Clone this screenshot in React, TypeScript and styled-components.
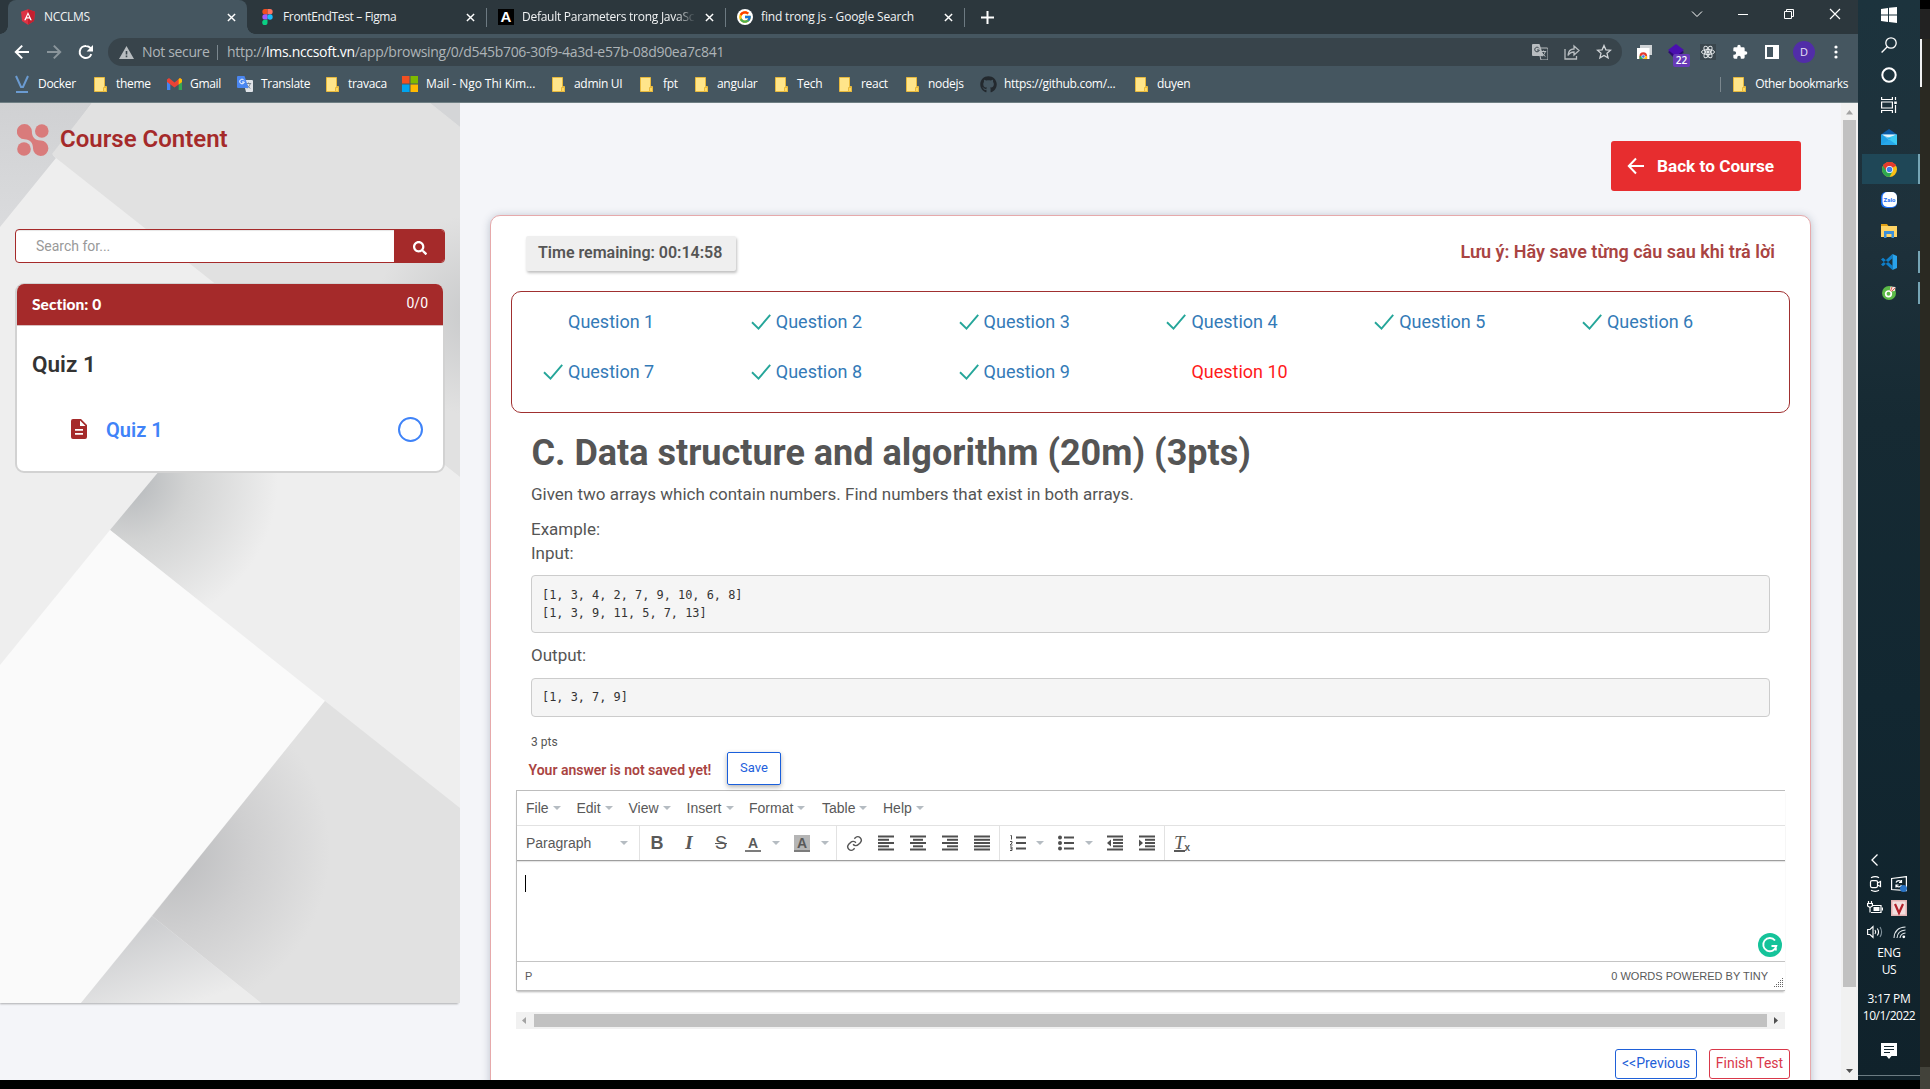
import React from "react";
import styled, { createGlobalStyle } from "styled-components";
import { FaSearch, FaGithub } from "react-icons/fa";
import { FcGoogle } from "react-icons/fc";

const Global = createGlobalStyle`
  * { box-sizing: border-box; }
  body { margin: 0; background: #000; overflow: hidden; }
  svg { display: block; flex: none; }
`;

const ui = `"Open Sans", "Noto Sans", sans-serif`;
const roboto = `Roboto, sans-serif`;
const arial = `"Liberation Sans", Arial, sans-serif`;

/* ---------- desktop ---------- */

const Desktop = styled.div`
  display: grid;
  grid-template-columns: 1858px 62px 10px;
  width: 1930px;
  height: 1089px;
  background: #000;
  overflow: hidden;
`;
const Browser = styled.div`
  display: flex;
  flex-direction: column;
  height: 1080px;
  overflow: hidden;
  background: #f4f5f9;
`;

/* ---------- browser chrome ---------- */

const TabStrip = styled.div`
  display: flex;
  height: 34px;
  flex: none;
  padding-left: 8px;
  background: #2c373d;
`;
const Tab = styled.div<{ $active?: boolean; $sep?: boolean }>`
  display: flex;
  align-items: center;
  width: 239px;
  height: 34px;
  padding: 0 0 0 12px;
  position: relative;
  color: #f1f3f4;
  background: ${(p) => (p.$active ? "#455660" : "transparent")};
  border-radius: 8px 8px 0 0;
  &::before {
    content: "";
    display: ${(p) => (p.$active ? "block" : "none")};
    position: absolute;
    left: -8px;
    right: -8px;
    bottom: 0;
    height: 8px;
    background:
      radial-gradient(circle at 0 0, transparent 7.500px, #455660 8px) left / 8px 8px no-repeat,
      radial-gradient(circle at 100% 0, transparent 7.500px, #455660 8px) right / 8px 8px no-repeat;
  }
  &::after {
    content: "";
    position: absolute;
    right: -1px;
    top: 8px;
    width: 1px;
    height: 19px;
    background: ${(p) => (p.$sep ? "#6d7a82" : "transparent")};
  }
`;
const Favicon = styled.div`
  width: 16px;
  height: 16px;
  flex: none;
  display: flex;
  align-items: center;
  justify-content: center;
`;
const TabText = styled.div<{ $ls?: number; $fade?: boolean }>`
  flex: none;
  width: 175px;
  margin: 0 8px;
  padding-bottom: 1px;
  overflow: hidden;
  white-space: nowrap;
  font: 12px/18px ${ui};
  letter-spacing: ${(p) => p.$ls ?? -0.35}px;
  ${(p) => p.$fade && "-webkit-mask-image: linear-gradient(90deg, #000 88%, transparent 99%);"}
`;
const WindowControls = styled.div`
  display: flex;
  margin-left: auto;
  padding: 6px 15px 0 0;
  gap: 30px;
  color: #fff;
`;
const PlusWrap = styled.div`
  display: flex;
  align-items: center;
  margin-left: 17px;
`;
const Toolbar = styled.div`
  display: flex;
  align-items: center;
  flex: none;
  height: 36px;
  padding: 0 12px 0 14px;
  background: #455660;
`;
const NavIcons = styled.div`
  display: flex;
  gap: 16px;
  width: 94px;
`;
const Omnibox = styled.div`
  display: flex;
  align-items: center;
  width: 1514px;
  height: 28px;
  padding: 0 10px 0 11px;
  border-radius: 14px;
  background: #38444b;
  color: #aeb4b8;
  font: 14px/20px ${ui};
  white-space: nowrap;
`;
const NotSecure = styled.span`
  margin-left: 8px;
  width: 75px;
  letter-spacing: -0.35px;
`;
const Bar = styled.span<{ $h: number }>`
  width: 1px;
  height: ${(p) => p.$h}px;
  background: #7b878e;
`;
const Url = styled.span`
  margin-left: 9px;
  letter-spacing: -0.3px;
  b { font-weight: 400; color: #fff; }
`;
const OmniIcons = styled.div`
  display: flex;
  align-items: center;
  gap: 16px;
  margin-left: auto;
`;
const ExtIcons = styled.div`
  display: flex;
  align-items: center;
  margin-left: auto;
  margin-right: 1px;
  gap: 14px;
`;
const ExtBox = styled.div`
  position: relative;
  width: 18px;
  height: 18px;
  display: flex;
  align-items: center;
  justify-content: center;
`;
const Count = styled.span`
  position: absolute;
  left: 6px;
  top: 11px;
  width: 17px;
  height: 13px;
  border-radius: 2px;
  background: #673ab7;
  color: #fff;
  font: 600 10px/13px ${ui};
  text-align: center;
`;
const Avatar = styled.div`
  width: 22px;
  height: 22px;
  margin: 0 -2px;
  border-radius: 50%;
  background: #512da8;
  color: #e8e0f5;
  font: 11px/22px ${ui};
  text-align: center;
`;
const Bookmarks = styled.div`
  display: flex;
  align-items: center;
  flex: none;
  height: 33px;
  padding: 0 10px 4px 14px;
  background: #455660;
  border-bottom: 1px solid #6f7f84;
`;
const Bookmark = styled.div<{ $w?: number; $gap?: number; $ls?: number }>`
  display: flex;
  align-items: center;
  gap: ${(p) => p.$gap ?? 8}px;
  width: ${(p) => (p.$w ? `${p.$w}px` : "auto")};
  flex: none;
  color: #fff;
  white-space: nowrap;
  font: 12px/18px ${ui};
  letter-spacing: ${(p) => p.$ls ?? -0.3}px;
`;
const BookmarkEnd = styled.div`
  display: flex;
  align-items: center;
  gap: 12px;
  margin-left: auto;
`;

/* ---------- page ---------- */

const Page = styled.div`
  display: grid;
  grid-template-columns: 461px 1fr 17px;
  height: 977px;
  background: #f4f5f9;
`;
const Sidebar = styled.aside`
  position: relative;
  width: 460px;
  height: 900px;
  background: #eee;
  box-shadow: -1px 2px 2px -1px rgba(0, 0, 0, 0.3);
  font-family: ${roboto};
`;
const Backdrop = styled.div`
  position: absolute;
  inset: 0;
`;
const SideContent = styled.div`
  position: relative;
  padding: 20px 15px 0;
`;
const Brand = styled.div`
  display: flex;
  align-items: center;
  height: 34px;
  padding-left: 2px;
  gap: 11px;
  color: #a52a2a;
  font: 600 24px/34px ${roboto};
  span { position: relative; top: -1px; }
`;
const SearchBox = styled.div`
  display: flex;
  width: 430px;
  height: 34px;
  margin-top: 72px;
  border: 1px solid #a52a2a;
  border-radius: 4px;
  overflow: hidden;
  background: #fff;
`;
const SearchField = styled.div`
  width: 378px;
  padding-left: 20px;
  color: #999;
  font: 14px/32px ${roboto};
  box-shadow: inset 0 1px 1px rgba(0, 0, 0, 0.1);
`;
const SearchButton = styled.div`
  flex: 1;
  display: flex;
  align-items: center;
  justify-content: center;
  padding: 3px 0 0 2px;
  background: #a52a2a;
  color: #fff;
`;
const SectionCard = styled.div`
  width: 430px;
  margin-top: 20px;
  height: 190px;
  border: 2px solid #d2d2d2;
  border-top-width: 1px;
  border-radius: 9px;
  background: #fff;
  overflow: hidden;
`;
const SectionHead = styled.div`
  display: flex;
  justify-content: space-between;
  height: 42px;
  padding: 0 15px;
  background: #a52a2a;
  border-bottom: 1px solid #d8c0c0;
  color: #fff;
`;
const SectionName = styled.span`
  font: 900 15.500px/40px Lato, sans-serif;
  letter-spacing: 0.05px;
`;
const SectionCount = styled.span`
  font: 14px/38px ${roboto};
`;
const QuizTitle = styled.div`
  height: 74px;
  padding-left: 15px;
  color: #333;
  font: 600 22.500px/76px ${roboto};
`;
const QuizRow = styled.div`
  display: flex;
  align-items: center;
  height: 58px;
  padding: 0 20px 0 54px;
`;
const QuizName = styled.span`
  margin: 2px auto 0 19px;
  color: #3f83f8;
  font: 600 20px/56px ${roboto};
`;
const Ring = styled.span`
  width: 25px;
  height: 25px;
  border: 2px solid #3f83f8;
  border-radius: 50%;
`;

const Main = styled.main`
  display: flex;
  flex-direction: column;
  height: 977px;
  padding: 38px 0 0 29px;
  overflow: hidden;
  font-family: ${roboto};
  color: #555;
`;
const BackButton = styled.div`
  display: flex;
  align-items: center;
  flex: none;
  width: 190px;
  height: 50px;
  margin-left: 1121px;
  padding-left: 16px;
  gap: 12px;
  border-radius: 3px;
  background: #e72d2f;
  color: #fff;
  font: 700 17.200px/52px ${roboto};
`;
const Panel = styled.section`
  flex: none;
  width: 1321px;
  height: 900px;
  margin-top: 24px;
  padding-top: 20px;
  border: 1px solid #e6a9ab;
  border-radius: 10px;
  background: #fff;
  box-shadow: 0 1px 9px rgba(40, 60, 90, 0.28);
`;
const PanelTop = styled.div`
  display: flex;
  justify-content: space-between;
  height: 55px;
  padding: 0 35px 0 35px;
`;
const Timer = styled.div`
  width: 210px;
  height: 35px;
  padding-left: 12px;
  border-radius: 2px;
  background: #efefef;
  box-shadow: 1px 2px 3px rgba(0, 0, 0, 0.25);
  font: 600 16px/33px ${roboto};
  white-space: nowrap;
`;
const Note = styled.div`
  color: #a94442;
  font: 600 18px/32px ${roboto};
`;
const Questions = styled.div`
  display: grid;
  grid-template-columns: repeat(6, 207.8px);
  grid-auto-rows: 50px;
  width: 1279px;
  height: 122px;
  margin-left: 20px;
  padding: 5px 0 0 31px;
  border: 1px solid #a03030;
  border-radius: 10px;
  overflow: hidden;
`;
const Question = styled.div<{ $current?: boolean }>`
  display: flex;
  align-items: center;
  gap: 5px;
  color: ${(p) => (p.$current ? "#ff1a1a" : "#337ab7")};
  font: 18px/50px ${roboto};
`;
const CheckSlot = styled.span`
  width: 20px;
`;
const Body = styled.div`
  padding: 0 40px;
  font: 17px/24px ${roboto};
`;
const Heading = styled.h1`
  margin: 20px 0 0 0.500px;
  font: 700 36px/40px ${roboto};
`;
const Line = styled.p<{ $top?: number }>`
  margin: ${(p) => p.$top ?? 0}px 0 0;
`;
const Code = styled.pre<{ $top: number; $h: number; $pad: number }>`
  width: 1239px;
  height: ${(p) => p.$h}px;
  margin: ${(p) => p.$top}px 0 0;
  padding: ${(p) => p.$pad}px 10px;
  border: 1px solid #ccc;
  border-radius: 4px;
  background: #f5f5f5;
  color: #333;
  font: 11.9px/18px "DejaVu Sans Mono", monospace;
`;
const Points = styled.div`
  margin: 17px 0 0 40px;
  font: 12px/16px ${roboto};
`;
const SaveRow = styled.div`
  display: flex;
  height: 33px;
  margin: 2px 0 0 37.5px;
`;
const Unsaved = styled.div`
  width: 198.5px;
  padding-top: 2px;
  color: #a94442;
  font: 600 14px/33px ${roboto};
`;
const SaveButton = styled.div`
  width: 54px;
  height: 33px;
  border: 1px solid #1a5fdb;
  border-radius: 2px;
  box-shadow: 0 2px 5px rgba(0, 0, 0, 0.3);
  color: #2360dc;
  font: 13px/30px ${roboto};
  text-align: center;
`;

/* ---------- editor ---------- */

const Editor = styled.div`
  width: 1269px;
  height: 201px;
  margin: 5px 0 0 25px;
  border: 1px solid #bdbdbd;
  border-right: 0;
  box-shadow: 0 2px 2px -1px rgba(0, 0, 0, 0.3);
  font-family: ${arial};
  color: #595959;
`;
const MenuBar = styled.div`
  display: flex;
  height: 35px;
  padding-left: 9px;
  border-bottom: 1px solid #e2e2e2;
`;
const MenuItem = styled.div<{ $w: number }>`
  display: flex;
  align-items: center;
  gap: 4px;
  width: ${(p) => p.$w}px;
  font: 14px/34px ${arial};
`;
const Caret = styled.span<{ $l?: number }>`
  width: 0;
  flex: none;
  margin-left: ${(p) => p.$l ?? 0}px;
  border: 4px solid transparent;
  border-top-color: #b5bcc2;
  border-bottom: 0;
`;
const ToolRow = styled.div`
  display: flex;
  height: 35px;
  border-bottom: 1px solid #9e9e9e;
  box-shadow: 0 1px 1px rgba(0, 0, 0, 0.1);
`;
const ToolGroup = styled.div<{ $w: number; $pad?: number }>`
  display: flex;
  align-items: center;
  width: ${(p) => p.$w}px;
  padding-left: ${(p) => p.$pad ?? 1}px;
  border-right: 1px solid #e2e2e2;
  font: 14px/34px ${arial};
  &:last-child { border-right: 0; }
`;
const Tool = styled.div<{ $l?: number }>`
  display: flex;
  align-items: center;
  justify-content: center;
  width: 32px;
  height: 34px;
  margin-left: ${(p) => p.$l ?? 0}px;
  flex: none;
`;
const Glyph = styled.span<{ $kind: "b" | "i" | "s" }>`
  line-height: 34px;
  ${(p) => p.$kind === "b" && `font: 700 18px/34px ${arial};`}
  ${(p) => p.$kind === "i" && `font: italic 700 19px/34px "Liberation Serif", serif;`}
  ${(p) => p.$kind === "s" && `font: 18px/34px ${arial}; text-decoration: line-through;`}
`;
const ColorGlyph = styled.span<{ $fill?: boolean }>`
  width: 16px;
  height: 17px;
  border-bottom: 2px solid #7c7c7c;
  background: ${(p) => (p.$fill ? "#b5b5b5" : "transparent")};
  text-align: center;
  font: 700 14px/16px ${arial};
`;
const ClearGlyph = styled.span`
  display: flex;
  align-items: flex-end;
  height: 17px;
  font: italic 19px/17px "Liberation Serif", serif;
  border-bottom: 0;
  span { font: 700 10px/8px ${arial}; }
  i { border-bottom: 2px solid #595959; height: 17px; line-height: 15px; }
`;
const EditArea = styled.div`
  position: relative;
  height: 100px;
  padding: 14px 0 0 8px;
`;
const TextCursor = styled.div`
  width: 1px;
  height: 17px;
  background: #000;
`;
const Grammarly = styled.div`
  position: absolute;
  left: 1241px;
  top: 72px;
`;
const StatusBar = styled.div`
  display: flex;
  height: 29px;
  padding: 0 1px 0 8px;
  border-top: 1px solid #c4c4c4;
  font: 11px/28px ${arial};
`;
const Words = styled.span`
  margin-left: auto;
  margin-right: 6px;
`;
const HScroll = styled.div`
  display: flex;
  align-items: center;
  justify-content: space-between;
  width: 1269px;
  height: 17px;
  margin: 21px 0 0 25px;
  padding: 0 5px 0 4px;
  background: #f1f1f1;
`;
const HThumb = styled.div`
  width: 1233px;
  height: 13px;
  background: #c1c1c1;
`;
const Actions = styled.div`
  display: flex;
  gap: 12px;
  justify-content: flex-end;
  margin: 20px 20px 0 0;
`;
const Outline = styled.div<{ $w: number; $c: string }>`
  width: ${(p) => p.$w}px;
  height: 30px;
  border: 1px solid ${(p) => p.$c};
  border-radius: 3px;
  color: ${(p) => p.$c};
  text-align: center;
  font: 14px/27px ${roboto};
  white-space: nowrap;
`;
const VScroll = styled.div`
  display: flex;
  flex-direction: column;
  align-items: center;
  height: 977px;
  padding-top: 7px;
  background: #f1f1f1;
`;
const VThumb = styled.div`
  width: 13px;
  height: 867px;
  margin: 5px 0 82px;
  background: #c1c1c1;
`;

/* ---------- task bar ---------- */

const TaskBar = styled.div`
  display: flex;
  flex-direction: column;
  height: 1080px;
  background: linear-gradient(180deg, #1c333d 0, #1e313b 230px, #162a33 420px, #122731 700px, #10222b 1080px);
  color: #fff;
`;
const TaskItem = styled.div<{ $h: number; $on?: boolean; $run?: number }>`
  position: relative;
  display: flex;
  align-items: center;
  justify-content: center;
  height: ${(p) => p.$h}px;
  margin-left: 4px;
  padding-right: 4px;
  background: ${(p) => (p.$on ? "#1f4757" : "transparent")};
  &::after {
    content: "";
    position: absolute;
    right: 0;
    top: calc(50% - ${(p) => (p.$run ?? 0) / 2}px);
    width: 2px;
    height: ${(p) => p.$run ?? 0}px;
    background: #76a5b5;
  }
`;
const Tray = styled.div`
  display: flex;
  flex-direction: column;
  margin-top: auto;
  height: 232px;
`;
const TrayRow = styled.div<{ $h: number }>`
  display: flex;
  align-items: center;
  height: ${(p) => p.$h}px;
  padding-left: 9px;
  gap: 8px;
`;
const TrayText = styled.div<{ $top?: number; $ls?: number }>`
  height: 17px;
  margin-top: ${(p) => p.$top ?? 0}px;
  text-align: center;
  white-space: nowrap;
  font: 12px/17px ${ui};
  letter-spacing: ${(p) => p.$ls ?? -0.5}px;
`;
const TrayBottom = styled.div`
  display: flex;
  justify-content: center;
  margin-top: 19px;
  height: 33px;
  border-bottom: 1px solid #6b7b82;
`;
const Edge = styled.div`
  display: flex;
  height: 1089px;
  background: linear-gradient(180deg, #000 9px, #222 9px, #222 39px, #2a2922 39px, #2a2922 1067px, #42423a 1067px);
`;
const EdgeLine = styled.div`
  width: 2px;
  height: 48px;
  margin-top: 39px;
  background: #f2f2f2;
`;

/* ---------- drawings ---------- */

const Folder = () => (
  <svg width="13" height="15" viewBox="0 0 13 15">
    <path d="M.5.5h10v9h2v5H.5z" fill="#ffe58a" stroke="#e8b93c" />
    <path d="M9.5 14.5v-4h3v4z" fill="#ffd95e" stroke="#e8b93c" />
  </svg>
);
const X = ({ s = 9, w = 1.6 }: { s?: number; w?: number }) => (
  <svg width={s} height={s} viewBox="0 0 10 10" stroke="#fff" strokeWidth={w} fill="none">
    <path d="M1 1l8 8M9 1l-8 8" />
  </svg>
);
const Angular = () => (
  <svg width="16" height="16" viewBox="0 0 16 16">
    <path d="M8 .3l7 2.5-1 9.3-6 3.6-6-3.6-1-9.3z" fill="#dd3344" />
    <path d="M8 .3l7 2.5-1 9.3-6 3.6z" fill="#c3202f" />
    <path d="M8 3L4.2 11.3h1.5l.8-1.9h3l.8 1.9h1.5zM8 5.6l1.1 2.7H6.9z" fill="#fff" fillRule="evenodd" />
  </svg>
);
const Figma = () => (
  <svg width="11" height="16" viewBox="0 0 11 16">
    <path d="M5.5 0H3a2.6 2.6 0 000 5.3h2.5z" fill="#f24e1e" />
    <path d="M5.5 0H8a2.6 2.6 0 010 5.3H5.5z" fill="#ff7262" />
    <path d="M5.5 5.3H3a2.6 2.6 0 000 5.3h2.5z" fill="#a259ff" />
    <circle cx="8" cy="8" r="2.7" fill="#1abcfe" />
    <path d="M5.5 10.7H3A2.65 2.65 0 105.5 13.3z" fill="#0acf83" />
  </svg>
);
const LetterBox = styled.span`
  width: 16px;
  height: 16px;
  background: #000;
  color: #fff;
  text-align: center;
  font: 700 15px/16px ${arial};
`;
const GBadge = styled.span`
  display: flex;
  align-items: center;
  justify-content: center;
  width: 16px;
  height: 16px;
  border-radius: 50%;
  background: #fff;
`;
const Arrow = ({ flip, c = "#fff" }: { flip?: boolean; c?: string }) => (
  <svg width="16" height="16" viewBox="0 0 16 16" fill="none" stroke={c} strokeWidth="2" transform={flip ? "scale(-1 1)" : undefined}>
    <path d="M15 8H2M8.2 1.6L1.8 8l6.4 6.4" />
  </svg>
);
const Reload = () => (
  <svg width="16" height="16" viewBox="0 0 16 16" fill="none">
    <path d="M13.3 10.2A6 6 0 118 2a6 6 0 014.6 2.2" stroke="#fff" strokeWidth="2" />
    <path d="M15 1v6.4H8.6z" fill="#fff" />
  </svg>
);
const Warning = () => (
  <svg width="15" height="13" viewBox="0 0 15 13">
    <path d="M7.5 0L15 13H0zM6.7 5v3.6h1.6V5zm0 4.6v1.6h1.6V9.6z" fill="#b8bdc0" fillRule="evenodd" />
  </svg>
);
const GTranslate = ({ mono }: { mono?: boolean }) => (
  <svg width="16" height="16" viewBox="0 0 16 16">
    <path d="M6 4h9a1 1 0 011 1v10a1 1 0 01-1 1H9z" fill={mono ? "none" : "#dfe3e8"} stroke={mono ? "#b8bdc0" : "none"} />
    <path d="M8.8 7.5h5.4M11.5 6.5v1M13.2 7.8c-.5 2-2 3.6-3.4 4.6M9.8 8.6c.8 1.7 2 2.8 3.6 3.8" stroke={mono ? "#b8bdc0" : "#7b8794"} fill="none" />
    <path d="M1 0h6.5l4 12H1a1 1 0 01-1-1V1a1 1 0 011-1z" fill={mono ? "#b8bdc0" : "#4a86f0"} />
    <path d="M7 4.3A2.3 2.3 0 107.3 6H5" stroke={mono ? "#38444b" : "#fff"} fill="none" />
  </svg>
);
const Share = () => (
  <svg width="16" height="16" viewBox="0 0 16 16" fill="none" stroke="#b8bdc0" strokeWidth="1.3">
    <path d="M1 5v10h11.500v-3M4 11.500c.3-4 2.200-6.500 6-6.500V2l5 4.500-5 4.500V8C7.500 8 5.500 9 4 11.500z" />
  </svg>
);
const Star = () => (
  <svg width="16" height="16" viewBox="0 0 16 16" fill="none" stroke="#cfd3d6" strokeWidth="1.3">
    <path d="M8 1.500l1.900 4.300 4.700.4-3.600 3.100 1.100 4.600L8 11.500l-4.100 2.400L5 9.300 1.400 6.200l4.700-.4z" />
  </svg>
);
const ReactMark = () => (
  <svg width="16" height="16" viewBox="0 0 16 16" fill="none" stroke="#e4e7e9" strokeWidth="1">
    <rect width="16" height="16" fill="#3a464d" stroke="none" />
    <ellipse cx="8" cy="8" rx="6.500" ry="2.500" />
    <ellipse cx="8" cy="8" rx="6.500" ry="2.500" transform="rotate(60 8 8)" />
    <ellipse cx="8" cy="8" rx="6.500" ry="2.500" transform="rotate(120 8 8)" />
    <circle cx="8" cy="8" r="1.200" fill="#e4e7e9" />
  </svg>
);
const Puzzle = () => (
  <svg width="16" height="16" viewBox="0 0 24 24" fill="#fff">
    <path d="M20.500 11H19V7a2 2 0 00-2-2h-4V3.500a2.500 2.500 0 00-5 0V5H4a2 2 0 00-2 2v3.800h1.500a2.700 2.700 0 010 5.400H2V20a2 2 0 002 2h3.800v-1.500a2.700 2.700 0 015.400 0V22H17a2 2 0 002-2v-4h1.500a2.500 2.500 0 000-5z" />
  </svg>
);
const ChromeMark = () => (
  <svg width="15" height="15" viewBox="0 0 14 14">
    <circle cx="7" cy="7" r="7" fill="#fbc116" />
    <path d="M7 7L.94 3.500A7 7 0 0113.060 3.500z" fill="#e33b2e" />
    <path d="M7 7L.94 3.500A7 7 0 007 14l3-5.300z" fill="#2da94f" />
    <path d="M7 3.800h6.200A7 7 0 00.94 3.500L3.900 8z" fill="#e33b2e" />
    <circle cx="7" cy="7" r="3.300" fill="#fff" />
    <circle cx="7" cy="7" r="2.600" fill="#3f7ee8" />
  </svg>
);
const Check = () => (
  <svg width="20" height="17" viewBox="0 0 20 17" fill="none" stroke="#26a69a" strokeWidth="1.900">
    <path d="M1 8.300L7.500 14.700 19.200.8" />
  </svg>
);
const Tri = ({ d, c, w = 9, h = 9 }: { d: string; c: string; w?: number; h?: number }) => (
  <svg width={w} height={h} viewBox={`0 0 ${w} ${h}`}>
    <path d={d} fill={c} />
  </svg>
);
const Lines = ({ rows, children }: { rows: number[][]; children?: React.ReactNode }) => (
  <svg width="18" height="16" viewBox="0 0 18 16" stroke="#4f4f4f" fill="#4f4f4f">
    {rows.map(([y, a, b]) => (
      <path key={y} d={`M${a} ${y}H${b}`} strokeWidth="2" />
    ))}
    {children}
  </svg>
);
const ys = [1.500, 4.800, 8, 11.300, 14.500];

const Backdrops = () => (
  <svg width="460" height="900" viewBox="0 103 460 900">
    <defs>
      <linearGradient id="tl" x1="0" y1="0" x2="0" y2="1">
        <stop offset="0" stopColor="#d0d1d3" />
        <stop offset="1" stopColor="#dadbdd" />
      </linearGradient>
      <radialGradient id="mid" gradientUnits="userSpaceOnUse" cx="128" cy="480" r="150">
        <stop offset="0" stopColor="#b4b7ba" />
        <stop offset=".4" stopColor="#d2d3d3" />
        <stop offset="1" stopColor="#eee" />
      </radialGradient>
      <radialGradient id="low" gradientUnits="userSpaceOnUse" cx="165" cy="850" r="165">
        <stop offset="0" stopColor="#b9babc" />
        <stop offset=".5" stopColor="#cfcfd0" />
        <stop offset="1" stopColor="#e1e1e1" />
      </radialGradient>
      <linearGradient id="bot" gradientUnits="userSpaceOnUse" x1="145" y1="925" x2="175" y2="1010">
        <stop offset="0" stopColor="#cdced0" />
        <stop offset="1" stopColor="#ececec" />
      </linearGradient>
      <radialGradient id="rt" gradientUnits="userSpaceOnUse" cx="475" cy="315" r="100">
        <stop offset="0" stopColor="#c9cacb" />
        <stop offset="1" stopColor="#e1e1e1" />
      </radialGradient>
    </defs>
    <rect y="103" width="460" height="900" fill="#eee" />
    <path d="M0 103H92L53 155 56 158 0 227z" fill="url(#tl)" />
    <path d="M92 103H430L460 127V477L56 158 52 154z" fill="#e1e1e1" />
    <path d="M460 200V477L340 382V200z" fill="url(#rt)" />
    <path d="M430 103H460V127z" fill="#d4d5d7" />
    <path d="M110 530L200 422H390L460 477V808z" fill="url(#mid)" />
    <path d="M0 665L110 530 325 701 81 1003H0z" fill="#fafafa" />
    <path d="M325 701L460 808V1003H261L152 916z" fill="url(#low)" />
    <path d="M152 916L261 1003H81z" fill="url(#bot)" />
  </svg>
);

const bookmarks: { t: string; w: number; icon?: React.ReactNode; gap?: number; ls?: number }[] = [
  { t: "Docker", w: 80, icon: <svg width="16" height="18" viewBox="0 0 16 18" fill="none" stroke="#6b9bd1" strokeWidth="2"><path d="M2 1l5 11h2l5-11M2 17h12" /></svg> },
  { t: "theme", w: 73, gap: 9 },
  { t: "Gmail", w: 70, icon: <svg width="15" height="12" viewBox="0 0 15 12"><path d="M0 1.500V12h3.300V5z" fill="#4285f4" /><path d="M15 1.500V12h-3.300V5z" fill="#34a853" /><path d="M0 1.500V4l7.500 5.500L15 4V1.500L13 0 7.500 4.500 2 0z" fill="#ea4335" /><path d="M11.700 1v5.500L15 4V1.500L13 0z" fill="#fbbc04" /></svg> },
  { t: "Translate", w: 89, icon: <GTranslate /> },
  { t: "travaca", w: 76, gap: 9 },
  { t: "Mail - Ngo Thi Kim...", w: 150, ls: -0.06, icon: <svg width="16" height="16" viewBox="0 0 16 16"><path d="M0 0h7.500v7.500H0z" fill="#f25022" /><path d="M8.500 0H16v7.500H8.500z" fill="#7fba00" /><path d="M0 8.500h7.500V16H0z" fill="#00a4ef" /><path d="M8.500 8.500H16V16H8.500z" fill="#ffb900" /></svg> },
  { t: "admin UI", w: 88, gap: 9 },
  { t: "fpt", w: 55, gap: 10 },
  { t: "angular", w: 80, gap: 9 },
  { t: "Tech", w: 64, gap: 9 },
  { t: "react", w: 67, gap: 9 },
  { t: "nodejs", w: 74, gap: 9 },
  { t: "https://github.com/...", w: 155, gap: 7, icon: <FaGithub size={17} color="#23292e" /> },
  { t: "duyen", w: 70, gap: 9 },
];

const menus: [string, number][] = [["File", 50.500], ["Edit", 52], ["View", 58], ["Insert", 62.500], ["Format", 73], ["Table", 61], ["Help", 50]];

export default function App() {
  return (
    <>
      <Global />
      <Desktop>
        <Browser>
          <TabStrip>
            <Tab $active>
              <Favicon><Angular /></Favicon>
              <TabText>NCCLMS</TabText>
              <X />
            </Tab>
            <Tab $sep>
              <Favicon><Figma /></Favicon>
              <TabText>FrontEndTest – Figma</TabText>
              <X />
            </Tab>
            <Tab $sep>
              <Favicon><LetterBox>A</LetterBox></Favicon>
              <TabText $fade $ls={-0.26}>Default Parameters trong JavaScript</TabText>
              <X />
            </Tab>
            <Tab $sep>
              <Favicon><GBadge><FcGoogle size={14} /></GBadge></Favicon>
              <TabText $ls={-0.16}>find trong js - Google Search</TabText>
              <X />
            </Tab>
            <PlusWrap>
              <svg width="13" height="13" viewBox="0 0 13 13" stroke="#fff" strokeWidth="2"><path d="M6.500 0v13M0 6.500h13" /></svg>
            </PlusWrap>
            <WindowControls>
              <svg width="16" height="16" viewBox="0 0 16 16" fill="none" stroke="#fff"><path d="M3 5.500l5 5 5-5" /></svg>
              <svg width="16" height="16" viewBox="0 0 16 16" fill="none" stroke="#fff"><path d="M3 8.500h10" /></svg>
              <svg width="16" height="16" viewBox="0 0 16 16" fill="none" stroke="#fff"><path d="M3.500 5.500h7v7h-7zM5.500 5.500v-2h7v7h-2" /></svg>
              <svg width="16" height="16" viewBox="0 0 16 16" fill="none" stroke="#fff" strokeWidth="1.200"><path d="M3 3l10 10M13 3L3 13" /></svg>
            </WindowControls>
          </TabStrip>
          <Toolbar>
            <NavIcons>
              <Arrow />
              <Arrow flip c="#8a959b" />
              <Reload />
            </NavIcons>
            <Omnibox>
              <Warning />
              <NotSecure>Not secure</NotSecure>
              <Bar $h={15} />
              <Url>http://<b>lms.nccsoft.vn</b>/app/browsing/0/d545b706-30f9-4a3d-e57b-08d90ea7c841</Url>
              <OmniIcons>
                <GTranslate mono />
                <Share />
                <Star />
              </OmniIcons>
            </Omnibox>
            <ExtIcons>
              <ExtBox>
                <svg width="15" height="14" viewBox="0 0 15 14"><path d="M3 0h12v10H3z" fill="#cfd3d6" /><path d="M0 3h12.500v11H0z" fill="#fff" /><path d="M2.500 14V11a3.800 3.800 0 017.600 0v3z" fill="#e33b2e" /><path d="M2.500 14v-3l3.800 0V14z" fill="#2da94f" /><path d="M6.300 11h3.800v3H6.300z" fill="#fbc116" /><circle cx="6.300" cy="11.500" r="1.700" fill="#3f7ee8" stroke="#fff" strokeWidth=".6" /></svg>
              </ExtBox>
              <ExtBox>
                <svg width="16" height="16" viewBox="0 0 16 16"><path d="M0 8l8-5 8 5-8 8z" fill="#2d0a73" /><path d="M0 6l8-6 8 6-8 6z" fill="#4a0fb0" /></svg>
                <Count>22</Count>
              </ExtBox>
              <ExtBox><ReactMark /></ExtBox>
              <ExtBox><Puzzle /></ExtBox>
              <ExtBox>
                <svg width="14" height="14" viewBox="0 0 14 14"><path d="M0 0h14v14H0zM2 2v10h6V2z" fill="#fff" fillRule="evenodd" /></svg>
              </ExtBox>
              <Avatar>D</Avatar>
              <ExtBox>
                <svg width="4" height="14" viewBox="0 0 4 14" fill="#fff"><circle cx="2" cy="2" r="1.600" /><circle cx="2" cy="7" r="1.600" /><circle cx="2" cy="12" r="1.600" /></svg>
              </ExtBox>
            </ExtIcons>
          </Toolbar>
          <Bookmarks>
            {bookmarks.map((b) => (
              <Bookmark key={b.t} $w={b.w} $gap={b.gap} $ls={b.ls}>
                {b.icon ?? <Folder />}
                <span>{b.t}</span>
              </Bookmark>
            ))}
            <BookmarkEnd>
              <Bar $h={15} />
              <Bookmark $gap={9} $ls={-0.38}><Folder /><span>Other bookmarks</span></Bookmark>
            </BookmarkEnd>
          </Bookmarks>
          <Page>
            <Sidebar>
              <Backdrop><Backdrops /></Backdrop>
              <SideContent>
                <Brand>
                  <svg width="32" height="32" viewBox="0 0 32 32" fill="#d97b7b">
                    <circle cx="24.800" cy="7" r="6.800" />
                    <circle cx="7" cy="25" r="6.800" />
                    <path d="M7.500 0a7.500 7.500 0 017.400 8c0 4 2.500 8.500 8.500 8.600A7.700 7.700 0 1116 24c0-5-3-8.500-8.500-8.700A7.600 7.600 0 017.500 0z" />
                  </svg>
                  <span>Course Content</span>
                </Brand>
                <SearchBox>
                  <SearchField>Search for...</SearchField>
                  <SearchButton><FaSearch size={14} /></SearchButton>
                </SearchBox>
                <SectionCard>
                  <SectionHead>
                    <SectionName>Section: 0</SectionName>
                    <SectionCount>0/0</SectionCount>
                  </SectionHead>
                  <QuizTitle>Quiz 1</QuizTitle>
                  <QuizRow>
                    <svg width="16" height="20" viewBox="0 0 16 20"><path d="M2 0h8l6 6v12a2 2 0 01-2 2H2a2 2 0 01-2-2V2a2 2 0 012-2zM9 1.500V7h5.500zM4 10v1.800h8V10zm0 4v1.800h8V14z" fill="#a52a2a" fillRule="evenodd" /></svg>
                    <QuizName>Quiz 1</QuizName>
                    <Ring />
                  </QuizRow>
                </SectionCard>
              </SideContent>
            </Sidebar>
            <Main>
              <BackButton>
                <svg width="18" height="18" viewBox="0 0 18 18" fill="none" stroke="#fff" strokeWidth="2"><path d="M17 9H2.500M9 1.500L1.800 9 9 16.500" /></svg>
                Back to Course
              </BackButton>
              <Panel>
                <PanelTop>
                  <Timer>Time remaining: 00:14:58</Timer>
                  <Note>Lưu ý: Hãy save từng câu sau khi trả lời</Note>
                </PanelTop>
                <Questions>
                  {Array.from({ length: 10 }, (_, i) => i + 1).map((n) => (
                    <Question key={n} $current={n === 10}>
                      <CheckSlot>{n !== 1 && n !== 10 && <Check />}</CheckSlot>
                      Question {n}
                    </Question>
                  ))}
                </Questions>
                <Body>
                  <Heading>C. Data structure and algorithm (20m) (3pts)</Heading>
                  <Line $top={9}>Given two arrays which contain numbers. Find numbers that exist in both arrays.</Line>
                  <Line $top={11}>Example:</Line>
                  <Line>Input:</Line>
                  <Code $top={10} $h={58} $pad={10}>{"[1, 3, 4, 2, 7, 9, 10, 6, 8]\n[1, 3, 9, 11, 5, 7, 13]"}</Code>
                  <Line $top={10}>Output:</Line>
                  <Code $top={11} $h={39} $pad={9}>[1, 3, 7, 9]</Code>
                </Body>
                <Points>3 pts</Points>
                <SaveRow>
                  <Unsaved>Your answer is not saved yet!</Unsaved>
                  <SaveButton>Save</SaveButton>
                </SaveRow>
                <Editor>
                  <MenuBar>
                    {menus.map(([t, w]) => (
                      <MenuItem key={t} $w={w}>{t}<Caret /></MenuItem>
                    ))}
                  </MenuBar>
                  <ToolRow>
                    <ToolGroup $w={123} $pad={9}>Paragraph<Caret $l={29} /></ToolGroup>
                    <ToolGroup $w={197}>
                      <Tool><Glyph $kind="b">B</Glyph></Tool>
                      <Tool><Glyph $kind="i">I</Glyph></Tool>
                      <Tool><Glyph $kind="s">S</Glyph></Tool>
                      <Tool><ColorGlyph>A</ColorGlyph></Tool>
                      <Caret $l={3} />
                      <Tool $l={6}><ColorGlyph $fill>A</ColorGlyph></Tool>
                      <Caret $l={3} />
                    </ToolGroup>
                    <ToolGroup $w={163}>
                      <Tool>
                        <svg width="17" height="17" viewBox="0 0 24 24" fill="none" stroke="#555" strokeWidth="2"><path d="M10 13a5 5 0 007.500.500l3-3a5 5 0 00-7-7l-1.700 1.700" /><path d="M14 11a5 5 0 00-7.500-.500l-3 3a5 5 0 007 7l1.700-1.700" /></svg>
                      </Tool>
                      <Tool><Lines rows={ys.map((y, i) => [y, 1, i % 2 ? 12 : 17])} /></Tool>
                      <Tool><Lines rows={ys.map((y, i) => [y, i % 2 ? 4 : 1, i % 2 ? 14 : 17])} /></Tool>
                      <Tool><Lines rows={ys.map((y, i) => [y, i % 2 ? 6 : 1, 17])} /></Tool>
                      <Tool><Lines rows={ys.map((y) => [y, 1, 17])} /></Tool>
                    </ToolGroup>
                    <ToolGroup $w={165} $pad={2}>
                      <Tool>
                        <Lines rows={[[2.500, 7, 17], [8, 7, 17], [13.500, 7, 17]]}>
                          <path d="M1.500.500h1v4M1 6.500h2v1.500L1 10h2.500M1 12h2v3.500H1M1.500 13.700H3" fill="none" strokeWidth="1" />
                        </Lines>
                      </Tool>
                      <Caret $l={2} />
                      <Tool $l={6}>
                        <Lines rows={[[2.500, 7, 17], [8, 7, 17], [13.500, 7, 17]]}>
                          <g stroke="none"><circle cx="3" cy="2.500" r="2" /><circle cx="3" cy="8" r="2" /><circle cx="3" cy="13.500" r="2" /></g>
                        </Lines>
                      </Tool>
                      <Caret $l={3} />
                      <Tool $l={6}><Lines rows={ys.map((y, i) => [y, i > 0 && i < 4 ? 7 : 1, 17])}><path d="M5 4.500v7L1 8z" stroke="none" /></Lines></Tool>
                      <Tool><Lines rows={ys.map((y, i) => [y, i > 0 && i < 4 ? 7 : 1, 17])}><path d="M1 4.500v7L5 8z" stroke="none" /></Lines></Tool>
                    </ToolGroup>
                    <ToolGroup $w={60}>
                      <Tool><ClearGlyph><i>T</i><span>x</span></ClearGlyph></Tool>
                    </ToolGroup>
                  </ToolRow>
                  <EditArea>
                    <TextCursor />
                    <Grammarly>
                      <svg width="24" height="24" viewBox="0 0 24 24"><circle cx="12" cy="12" r="12" fill="#15c39a" /><path d="M17 7.500A6.600 6.600 0 1018.300 13H13.500M17.800 13.200v4.300" fill="none" stroke="#fff" strokeWidth="1.900" /></svg>
                    </Grammarly>
                  </EditArea>
                  <StatusBar>
                    <span>P</span>
                    <Words>0 WORDS POWERED BY TINY</Words>
                    <svg width="10" height="28" viewBox="0 0 10 28" fill="#666">
                      {[0, 1, 2, 3, 4].map((r) => [0, 1, 2, 3, 4].map((c) => (r + c >= 4 ? <rect key={`${r}${c}`} x={c * 2} y={16 + r * 2} width="1" height="1" /> : null)))}
                    </svg>
                  </StatusBar>
                </Editor>
                <HScroll>
                  <Tri d="M6 1v7L2 4.500z" c="#a3a3a3" />
                  <HThumb />
                  <Tri d="M3 1v7l4-3.500z" c="#505050" />
                </HScroll>
                <Actions>
                  <Outline $w={82} $c="#1f60d8">&lt;&lt;Previous</Outline>
                  <Outline $w={81} $c="#d9384a">Finish Test</Outline>
                </Actions>
              </Panel>
            </Main>
            <VScroll>
              <Tri d="M1 4.500h7L4.500 0z" c="#a3a3a3" h={5} />
              <VThumb />
              <Tri d="M1 0h7L4.500 4z" c="#505050" h={5} />
            </VScroll>
          </Page>
        </Browser>
        <TaskBar>
          <TaskItem $h={30}>
            <svg width="16" height="16" viewBox="0 0 16 16" fill="#fff"><path d="M0 2l7-1v6.500H0zM8 .8L16 0v7.500H8zM0 8.500h7V15l-7-1zM8 8.500h8V16l-8-.9z" /></svg>
          </TaskItem>
          <TaskItem $h={30}>
            <svg width="16" height="16" viewBox="0 0 16 16" fill="none" stroke="#fff" strokeWidth="1.300"><circle cx="10" cy="6" r="5.200" /><path d="M6.300 9.700L.6 15.500" /></svg>
          </TaskItem>
          <TaskItem $h={30}>
            <svg width="16" height="16" viewBox="0 0 16 16" fill="none" stroke="#fff" strokeWidth="2"><circle cx="8" cy="8" r="6.700" /></svg>
          </TaskItem>
          <TaskItem $h={30}>
            <svg width="16" height="16" viewBox="0 0 16 16" fill="none" stroke="#fff" strokeWidth="1.200"><path d="M.6 0v2.500h10.800V0M.6 5h10.800v6H.6zM.6 16v-2.500h10.800V16M14.500 0v3M14.500 8v8" /><path d="M13.200 4.500h2.600v2.500h-2.600z" fill="#fff" stroke="none" /></svg>
          </TaskItem>
          <TaskItem $h={34}>
            <svg width="16" height="16" viewBox="0 0 16 16"><path d="M0 5.500L8 0l8 5.500V9H0z" fill="#0c59a4" /><path d="M0 5.500h16V16H0z" fill="#28a8ea" /><path d="M1 5.500h14L8 11z" fill="#e8f4fb" /><path d="M16 5.500V16L6 9z" fill="#3ccbf4" /><path d="M0 16l10-6.500L0 5.500z" fill="#1b9de2" opacity=".6" /></svg>
          </TaskItem>
          <TaskItem $h={30} $on $run={30}><ChromeMark /></TaskItem>
          <TaskItem $h={32}>
            <svg width="16" height="16" viewBox="0 0 16 16"><rect width="16" height="16" rx="5" fill="#1b6ef3" /><rect x="1.500" width="14.500" height="15" rx="5" fill="#fff" /><text x="8.500" y="9.800" fontSize="6" fontWeight="700" fontFamily="Roboto" textAnchor="middle" fill="#1b6ef3">Zalo</text></svg>
          </TaskItem>
          <TaskItem $h={30}>
            <svg width="16" height="14" viewBox="0 0 16 14"><path d="M0 0h6l1.500 2H0z" fill="#e0a015" /><path d="M0 2h16v11H0z" fill="#ffd465" /><path d="M3 7h10v7h-2.500v-4h-5v4H3z" fill="#3c8fd9" /></svg>
          </TaskItem>
          <TaskItem $h={32} $run={22}>
            <svg width="16" height="16" viewBox="0 0 16 16"><path d="M2 3.800L11.500 11.700V16L0 5.500zM2 12.200L11.500 4.300V0L0 10.500z" fill="#0f7fc9" /><path d="M11.500 0L16 2v12l-4.500 2z" fill="#29a3ec" /></svg>
          </TaskItem>
          <TaskItem $h={30} $run={22}>
            <svg width="14" height="14" viewBox="0 0 14 14"><circle cx="7" cy="7" r="7" fill="#5cb947" /><circle cx="6.500" cy="7.800" r="2.800" fill="none" stroke="#fff" strokeWidth="1.700" /><path d="M7.500 5.500l1-5L13.500 1 13 5z" fill="#f3e4de" /><path d="M8.500 5l1.500-4M9.500 5.500L13 2" stroke="#e04f3f" strokeWidth=".9" /></svg>
          </TaskItem>
          <Tray>
            <TrayRow $h={24}>
              <svg width="16" height="14" viewBox="0 0 16 14" fill="none" stroke="#fff" strokeWidth="1.300"><path d="M10.500 1.500L5 7l5.500 5.500" /></svg>
            </TrayRow>
            <TrayRow $h={24}>
              <svg width="16" height="16" viewBox="0 0 16 16" fill="none" stroke="#fff" strokeWidth="1.200"><rect x="3.500" y="4.600" width="7" height="7" rx="1.500" /><path d="M10.500 7l3-1.500v5l-3-1.500M4 1.700Q8.500-.500 12 1.700M4 14.300q4.500 2.200 8 0" /></svg>
              <svg width="16" height="16" viewBox="0 0 16 16" fill="none" stroke="#fff" strokeWidth="1.200"><path d="M.6 2.500L15.400.6v14L.6 13.500z" /><path d="M5 6.500c1-2.500 4.500-2.500 5.500 0M10.500 4v2.500H8M5 11.500V9h2.500M10.500 9c-1 2.500-4.500 2.500-5.500 0" /><circle cx="12.500" cy="12.500" r="3.500" fill="#2b74c4" stroke="none" /></svg>
            </TrayRow>
            <TrayRow $h={24}>
              <svg width="16" height="14" viewBox="0 0 16 14" fill="none" stroke="#fff" strokeWidth="1.200"><path d="M5 4.500h9v7H4M15.500 6.500v3M1.500 0v2M4.500 0v2M.6 2.500h4.800v2.500L3 6.500.6 5zM3 6.500v5" /><path d="M6.500 6h6v4h-6z" fill="#fff" stroke="none" /></svg>
              <svg width="16" height="16" viewBox="0 0 16 16"><rect width="16" height="16" fill="#e4b3b3" /><rect x="1.500" y="1.500" width="13" height="13" fill="#f3dede" /><path d="M4 4l4 9 4-9" fill="none" stroke="#b3202a" strokeWidth="2.200" /></svg>
            </TrayRow>
            <TrayRow $h={24}>
              <svg width="16" height="14" viewBox="0 0 16 14" fill="none" stroke="#fff" strokeWidth="1.100"><path d="M.6 4.500H3L6 1.500v11L3 9.500H.6zM8 5q1.500 2 0 4M10.300 3.500q2.500 3.500 0 7" /><path d="M13 2q3.200 5 0 10" stroke="#81919a" /></svg>
              <svg width="16" height="14" viewBox="0 0 16 14" fill="none" stroke="#dfe5e8" strokeWidth="1.100"><path d="M3 13Q3.500 2.500 14.500 2M6 13Q6.500 5.500 14.500 5M9 13Q9.500 8.500 14.500 8" /><circle cx="12.800" cy="11.800" r="1.400" fill="#fff" stroke="none" /></svg>
            </TrayRow>
            <TrayText $ls={-0.3}>ENG</TrayText>
            <TrayText>US</TrayText>
            <TrayText $top={12} $ls={-0.3}>3:17 PM</TrayText>
            <TrayText>10/1/2022</TrayText>
            <TrayBottom>
              <svg width="16" height="16" viewBox="0 0 16 16"><path d="M0 0h16v13h-5.500L8 16l-2.500-3H0z" fill="#fff" /><path d="M3 3.500h10M3 6.500h10M3 9.500h6" stroke="#12252e" strokeWidth="1.100" /></svg>
            </TrayBottom>
          </Tray>
        </TaskBar>
        <Edge><EdgeLine /></Edge>
      </Desktop>
    </>
  );
}
